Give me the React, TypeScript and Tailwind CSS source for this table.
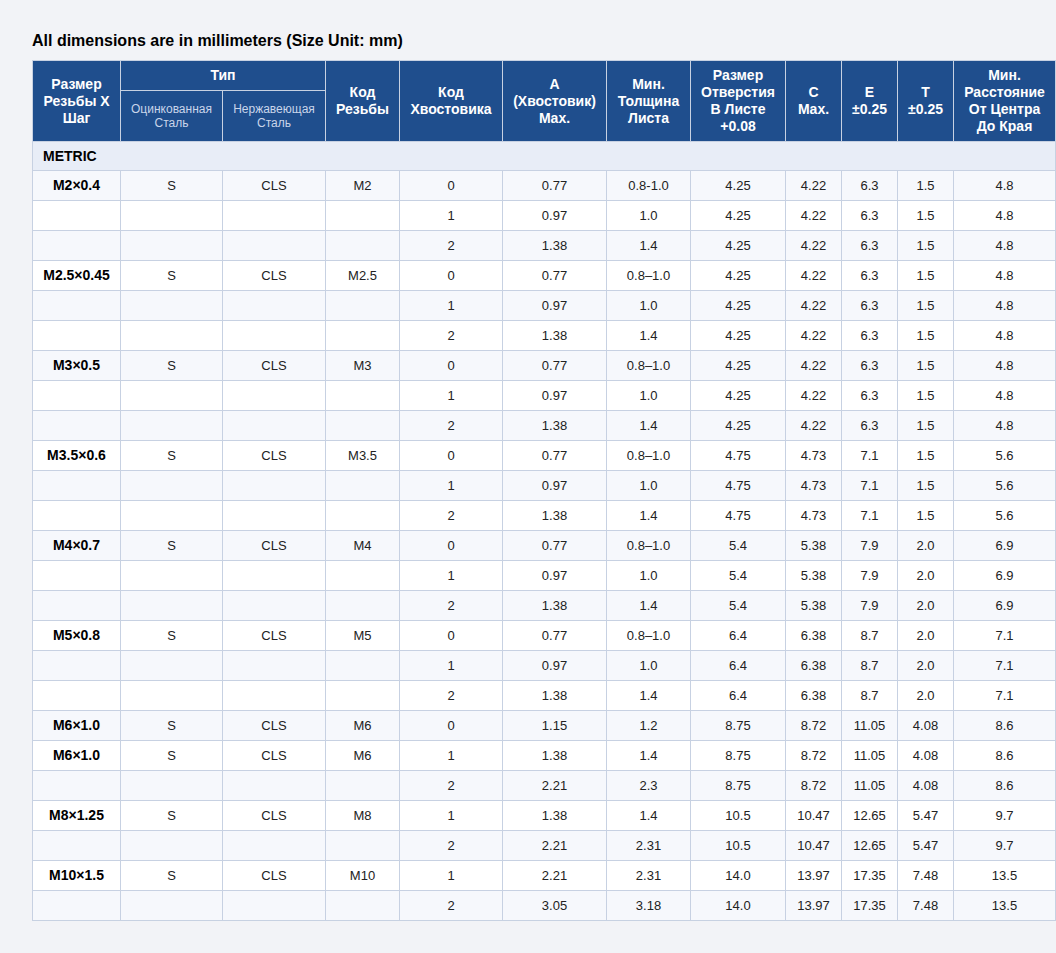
import type React from "react";

type Row = {
  size: string;
  s: string;
  cls: string;
  code: string;
  shank: string;
  a: string;
  minT: string;
  hole: string;
  c: string;
  e: string;
  t: string;
  edge: string;
};

const group = (
  size: string,
  code: string,
  hole: string,
  c: string,
  e: string,
  t: string,
  edge: string,
  firstThick: string
): Row[] => [
  { size, s: "S", cls: "CLS", code, shank: "0", a: "0.77", minT: firstThick, hole, c, e, t, edge },
  { size: "", s: "", cls: "", code: "", shank: "1", a: "0.97", minT: "1.0", hole, c, e, t, edge },
  { size: "", s: "", cls: "", code: "", shank: "2", a: "1.38", minT: "1.4", hole, c, e, t, edge },
];

const rows: Row[] = [
  ...group("M2×0.4", "M2", "4.25", "4.22", "6.3", "1.5", "4.8", "0.8-1.0"),
  ...group("M2.5×0.45", "M2.5", "4.25", "4.22", "6.3", "1.5", "4.8", "0.8–1.0"),
  ...group("M3×0.5", "M3", "4.25", "4.22", "6.3", "1.5", "4.8", "0.8–1.0"),
  ...group("M3.5×0.6", "M3.5", "4.75", "4.73", "7.1", "1.5", "5.6", "0.8–1.0"),
  ...group("M4×0.7", "M4", "5.4", "5.38", "7.9", "2.0", "6.9", "0.8–1.0"),
  ...group("M5×0.8", "M5", "6.4", "6.38", "8.7", "2.0", "7.1", "0.8–1.0"),
  { size: "M6×1.0", s: "S", cls: "CLS", code: "M6", shank: "0", a: "1.15", minT: "1.2", hole: "8.75", c: "8.72", e: "11.05", t: "4.08", edge: "8.6" },
  { size: "M6×1.0", s: "S", cls: "CLS", code: "M6", shank: "1", a: "1.38", minT: "1.4", hole: "8.75", c: "8.72", e: "11.05", t: "4.08", edge: "8.6" },
  { size: "", s: "", cls: "", code: "", shank: "2", a: "2.21", minT: "2.3", hole: "8.75", c: "8.72", e: "11.05", t: "4.08", edge: "8.6" },
  { size: "M8×1.25", s: "S", cls: "CLS", code: "M8", shank: "1", a: "1.38", minT: "1.4", hole: "10.5", c: "10.47", e: "12.65", t: "5.47", edge: "9.7" },
  { size: "", s: "", cls: "", code: "", shank: "2", a: "2.21", minT: "2.31", hole: "10.5", c: "10.47", e: "12.65", t: "5.47", edge: "9.7" },
  { size: "M10×1.5", s: "S", cls: "CLS", code: "M10", shank: "1", a: "2.21", minT: "2.31", hole: "14.0", c: "13.97", e: "17.35", t: "7.48", edge: "13.5" },
  { size: "", s: "", cls: "", code: "", shank: "2", a: "3.05", minT: "3.18", hole: "14.0", c: "13.97", e: "17.35", t: "7.48", edge: "13.5" },
];

const widths = [88, 102, 103, 74, 103, 104, 84, 95, 56, 56, 56, 102];

const Th: React.FC<{ children: React.ReactNode; rowSpan?: number; colSpan?: number }> = ({
  children,
  rowSpan,
  colSpan,
}) => (
  <th
    rowSpan={rowSpan}
    colSpan={colSpan}
    className="border border-[#c7d1e2] px-1 pt-[6px] pb-[6px] text-center align-middle text-[14px] font-bold leading-[17px] text-white"
  >
    {children}
  </th>
);

const App: React.FC = () => {
  return (
    <div
      className="min-h-screen bg-[#f2f3f7] pl-8 pt-[29px] pb-8 text-[#222]"
      style={{ fontFamily: '"Liberation Sans", Arial, sans-serif' }}
    >
      <h2 className="mb-[7px] text-[16px] font-bold leading-[24px] text-black">
        All dimensions are in millimeters (Size Unit: mm)
      </h2>
      <table className="w-[1024px] table-fixed border-collapse border border-[#c7d1e2]">
        <colgroup>
          {widths.map((w, i) => (
            <col key={i} style={{ width: w }} />
          ))}
        </colgroup>
        <thead className="bg-[#1f4e8d]">
          <tr className="h-[27px]">
            <Th rowSpan={2}>
              Размер
              <br />
              Резьбы Х
              <br />
              Шаг
            </Th>
            <Th colSpan={2}>Тип</Th>
            <Th rowSpan={2}>
              Код
              <br />
              Резьбы
            </Th>
            <Th rowSpan={2}>
              Код
              <br />
              Хвостовика
            </Th>
            <Th rowSpan={2}>
              A
              <br />
              (Хвостовик)
              <br />
              Max.
            </Th>
            <Th rowSpan={2}>
              Мин.
              <br />
              Толщина
              <br />
              Листа
            </Th>
            <Th rowSpan={2}>
              Размер
              <br />
              Отверстия
              <br />В Листе
              <br />
              +0.08
            </Th>
            <Th rowSpan={2}>
              C
              <br />
              Max.
            </Th>
            <Th rowSpan={2}>
              E
              <br />
              ±0.25
            </Th>
            <Th rowSpan={2}>
              T
              <br />
              ±0.25
            </Th>
            <Th rowSpan={2}>
              Мин.
              <br />
              Расстояние
              <br />
              От Центра
              <br />
              До Края
            </Th>
          </tr>
          <tr>
            <th className="border border-[#c7d1e2] px-1 py-1 text-center text-[12px] font-normal leading-[14px] text-[#c9d5ea]">
              Оцинкованная
              <br />
              Сталь
            </th>
            <th className="border border-[#c7d1e2] px-1 py-1 text-center text-[12px] font-normal leading-[14px] text-[#c9d5ea]">
              Нержавеющая
              <br />
              Сталь
            </th>
          </tr>
        </thead>
        <tbody>
          <tr className="h-[29px] bg-[#e8edf7]">
            <td colSpan={12} className="border border-[#c7d1e2] px-[10px] text-[14px] font-bold text-black">
              METRIC
            </td>
          </tr>
          {rows.map((r, i) => (
            <tr key={i} className={`h-[30px] ${i % 2 === 0 ? "bg-[#f6f8fc]" : "bg-white"}`}>
              <td className="border border-[#c7d1e2] text-center text-[14px] font-bold text-black">{r.size}</td>
              {[r.s, r.cls, r.code, r.shank, r.a, r.minT, r.hole, r.c, r.e, r.t, r.edge].map((v, j) => (
                <td key={j} className="border border-[#c7d1e2] text-center text-[13px] text-[#222]">
                  {v}
                </td>
              ))}
            </tr>
          ))}
        </tbody>
      </table>
    </div>
  );
};

export default App;
